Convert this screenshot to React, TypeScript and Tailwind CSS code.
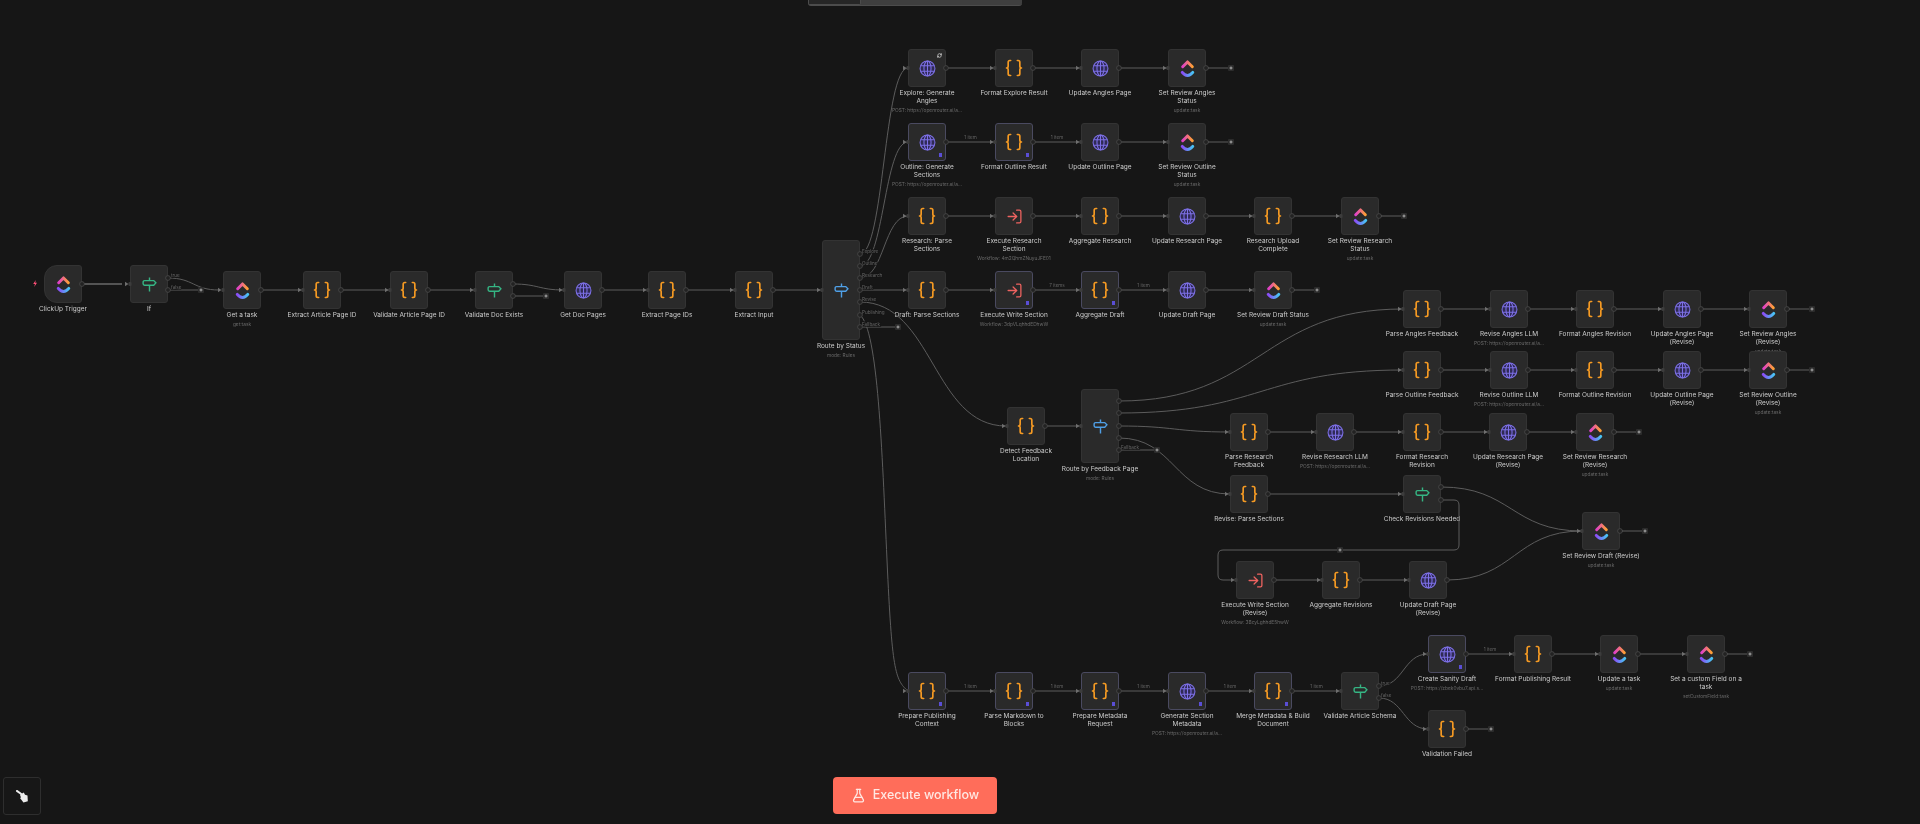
import { Braces, FlaskConical, LogIn, RefreshCw } from "lucide-react";

type Kind = "clickup" | "code" | "http" | "if" | "switch" | "exec";

type FlowNode = {
  id: string;
  x: number;
  y: number;
  kind: Kind;
  label: string[];
  sub?: string;
  h?: number;
  pin?: boolean;
  end?: boolean;
  trigger?: boolean;
  outs?: number[];
};

const LLM = "POST: https://openrouter.ai/a...";

const nodes: FlowNode[] = [
  { id: "trigger", x: 63, y: 284, kind: "clickup", label: ["ClickUp Trigger"], trigger: true },
  { id: "if", x: 149, y: 284, kind: "if", label: ["If"], outs: [278, 290] },
  { id: "task", x: 242, y: 290, kind: "clickup", label: ["Get a task"], sub: "get:task" },
  { id: "extract", x: 322, y: 290, kind: "code", label: ["Extract Article Page ID"] },
  { id: "validate", x: 409, y: 290, kind: "code", label: ["Validate Article Page ID"] },
  { id: "docExists", x: 494, y: 290, kind: "if", label: ["Validate Doc Exists"], outs: [284, 296] },
  { id: "docPages", x: 583, y: 290, kind: "http", label: ["Get Doc Pages"] },
  { id: "pageIds", x: 667, y: 290, kind: "code", label: ["Extract Page IDs"] },
  { id: "input", x: 754, y: 290, kind: "code", label: ["Extract Input"] },
  { id: "route", x: 841, y: 290, h: 100, kind: "switch", label: ["Route by Status"], sub: "mode: Rules", outs: [254, 266, 278, 290, 302, 315, 327] },

  { id: "e1", x: 927, y: 68, kind: "http", label: ["Explore: Generate", "Angles"], sub: LLM },
  { id: "e2", x: 1014, y: 68, kind: "code", label: ["Format Explore Result"] },
  { id: "e3", x: 1100, y: 68, kind: "http", label: ["Update Angles Page"] },
  { id: "e4", x: 1187, y: 68, kind: "clickup", label: ["Set Review Angles", "Status"], sub: "update:task", end: true },

  { id: "o1", x: 927, y: 142, kind: "http", label: ["Outline: Generate", "Sections"], sub: LLM, pin: true },
  { id: "o2", x: 1014, y: 142, kind: "code", label: ["Format Outline Result"], pin: true },
  { id: "o3", x: 1100, y: 142, kind: "http", label: ["Update Outline Page"] },
  { id: "o4", x: 1187, y: 142, kind: "clickup", label: ["Set Review Outline", "Status"], sub: "update:task", end: true },

  { id: "r1", x: 927, y: 216, kind: "code", label: ["Research: Parse", "Sections"] },
  { id: "r2", x: 1014, y: 216, kind: "exec", label: ["Execute Research", "Section"], sub: "Workflow: 4m2QhmZNuyuJFE01" },
  { id: "r3", x: 1100, y: 216, kind: "code", label: ["Aggregate Research"] },
  { id: "r4", x: 1187, y: 216, kind: "http", label: ["Update Research Page"] },
  { id: "r5", x: 1273, y: 216, kind: "code", label: ["Research Upload", "Complete"] },
  { id: "r6", x: 1360, y: 216, kind: "clickup", label: ["Set Review Research", "Status"], sub: "update:task", end: true },

  { id: "d1", x: 927, y: 290, kind: "code", label: ["Draft: Parse Sections"] },
  { id: "d2", x: 1014, y: 290, kind: "exec", label: ["Execute Write Section"], sub: "Workflow: 3dpVLqhhdEDhwW", pin: true },
  { id: "d3", x: 1100, y: 290, kind: "code", label: ["Aggregate Draft"], pin: true },
  { id: "d4", x: 1187, y: 290, kind: "http", label: ["Update Draft Page"] },
  { id: "d5", x: 1273, y: 290, kind: "clickup", label: ["Set Review Draft Status"], sub: "update:task", end: true },

  { id: "detect", x: 1026, y: 426, kind: "code", label: ["Detect Feedback", "Location"] },
  { id: "routeFb", x: 1100, y: 426, h: 74, kind: "switch", label: ["Route by Feedback Page"], sub: "mode: Rules", outs: [401, 413, 426, 438, 450] },

  { id: "a1", x: 1422, y: 309, kind: "code", label: ["Parse Angles Feedback"] },
  { id: "a2", x: 1509, y: 309, kind: "http", label: ["Revise Angles LLM"], sub: LLM },
  { id: "a3", x: 1595, y: 309, kind: "code", label: ["Format Angles Revision"] },
  { id: "a4", x: 1682, y: 309, kind: "http", label: ["Update Angles Page", "(Revise)"] },
  { id: "a5", x: 1768, y: 309, kind: "clickup", label: ["Set Review Angles", "(Revise)"], sub: "update:task", end: true },

  { id: "b1", x: 1422, y: 370, kind: "code", label: ["Parse Outline Feedback"] },
  { id: "b2", x: 1509, y: 370, kind: "http", label: ["Revise Outline LLM"], sub: LLM },
  { id: "b3", x: 1595, y: 370, kind: "code", label: ["Format Outline Revision"] },
  { id: "b4", x: 1682, y: 370, kind: "http", label: ["Update Outline Page", "(Revise)"] },
  { id: "b5", x: 1768, y: 370, kind: "clickup", label: ["Set Review Outline", "(Revise)"], sub: "update:task", end: true },

  { id: "c1", x: 1249, y: 432, kind: "code", label: ["Parse Research", "Feedback"] },
  { id: "c2", x: 1335, y: 432, kind: "http", label: ["Revise Research LLM"], sub: LLM },
  { id: "c3", x: 1422, y: 432, kind: "code", label: ["Format Research", "Revision"] },
  { id: "c4", x: 1508, y: 432, kind: "http", label: ["Update Research Page", "(Revise)"] },
  { id: "c5", x: 1595, y: 432, kind: "clickup", label: ["Set Review Research", "(Revise)"], sub: "update:task", end: true },

  { id: "s1", x: 1249, y: 494, kind: "code", label: ["Revise: Parse Sections"] },
  { id: "s2", x: 1422, y: 494, kind: "if", label: ["Check Revisions Needed"], outs: [487, 500] },
  { id: "sd", x: 1601, y: 531, kind: "clickup", label: ["Set Review Draft (Revise)"], sub: "update:task", end: true },
  { id: "w1", x: 1255, y: 580, kind: "exec", label: ["Execute Write Section", "(Revise)"], sub: "Workflow: 3BcyLghhdE5hwW" },
  { id: "w2", x: 1341, y: 580, kind: "code", label: ["Aggregate Revisions"] },
  { id: "w3", x: 1428, y: 580, kind: "http", label: ["Update Draft Page", "(Revise)"] },

  { id: "p1", x: 927, y: 691, kind: "code", label: ["Prepare Publishing", "Context"], pin: true },
  { id: "p2", x: 1014, y: 691, kind: "code", label: ["Parse Markdown to", "Blocks"], pin: true },
  { id: "p3", x: 1100, y: 691, kind: "code", label: ["Prepare Metadata", "Request"], pin: true },
  { id: "p4", x: 1187, y: 691, kind: "http", label: ["Generate Section", "Metadata"], sub: LLM, pin: true },
  { id: "p5", x: 1273, y: 691, kind: "code", label: ["Merge Metadata & Build", "Document"], pin: true },
  { id: "p6", x: 1360, y: 691, kind: "if", label: ["Validate Article Schema"], outs: [686, 698] },
  { id: "u1", x: 1447, y: 654, kind: "http", label: ["Create Sanity Draft"], sub: "POST: https://zbek0vbu7.api.s...", pin: true },
  { id: "u2", x: 1533, y: 654, kind: "code", label: ["Format Publishing Result"] },
  { id: "u3", x: 1619, y: 654, kind: "clickup", label: ["Update a task"], sub: "update:task" },
  { id: "u4", x: 1706, y: 654, kind: "clickup", label: ["Set a custom Field on a", "task"], sub: "setCustomField:task", end: true },
  { id: "vf", x: 1447, y: 729, kind: "code", label: ["Validation Failed"], end: true },
];

// straight runs of nodes, "label" is the item count over the line
const chains: [string, string, string?][] = [
  ["task", "extract"], ["extract", "validate"], ["validate", "docExists"], ["docPages", "pageIds"], ["pageIds", "input"], ["input", "route"],
  ["e1", "e2"], ["e2", "e3"], ["e3", "e4"],
  ["o1", "o2", "1 item"], ["o2", "o3", "1 item"], ["o3", "o4"],
  ["r1", "r2"], ["r2", "r3"], ["r3", "r4"], ["r4", "r5"], ["r5", "r6"],
  ["d2", "d3", "7 items"], ["d3", "d4", "1 item"], ["d4", "d5"], ["d1", "d2"],
  ["detect", "routeFb"],
  ["a1", "a2"], ["a2", "a3"], ["a3", "a4"], ["a4", "a5"],
  ["b1", "b2"], ["b2", "b3"], ["b3", "b4"], ["b4", "b5"],
  ["c1", "c2"], ["c2", "c3"], ["c3", "c4"], ["c4", "c5"],
  ["w1", "w2"], ["w2", "w3"],
  ["p1", "p2", "1 item"], ["p2", "p3", "1 item"], ["p3", "p4", "1 item"], ["p4", "p5", "1 item"], ["p5", "p6", "1 item"],
  ["u1", "u2", "1 item"], ["u2", "u3"], ["u3", "u4"],
];

const curve = (x1: number, y1: number, x2: number, y2: number) => {
  const mx = (x1 + x2) / 2;
  return `M${x1} ${y1} C${mx} ${y1} ${mx} ${y2} ${x2} ${y2}`;
};

const curves = [
  curve(168, 278, 219, 290),
  curve(513, 284, 564, 290),
  curve(860, 254, 908, 68),
  curve(860, 266, 908, 142),
  curve(860, 278, 908, 216),
  "M860 290 H908",
  curve(860, 302, 1006, 426),
  "M860 315 C878 330 882 450 887 560 S895 680 908 691",
  curve(1119, 401, 1403, 309),
  curve(1119, 413, 1403, 370),
  curve(1119, 426, 1230, 432),
  curve(1119, 438, 1230, 494),
  curve(1441, 487, 1582, 531),
  curve(1447, 580, 1582, 531),
  "M1268 494 H1403",
  "M1441 500 H1454 Q1459 500 1459 505 V545 Q1459 550 1454 550 H1223 Q1218 550 1218 555 V575 Q1218 580 1223 580 H1236",
  curve(1379, 686, 1428, 654),
  curve(1379, 698, 1428, 729),
];

// stubs that end in a bare plus
const stubs: [number, number, number][] = [
  [168, 290, 201],
  [513, 296, 546],
  [860, 327, 898],
  [1119, 450, 1157],
];

const portLabels: [number, number, string][] = [
  [171, 277, "true"], [171, 289, "false"],
  [862, 253, "Explore"], [862, 265, "Outline"], [862, 277, "Research"], [862, 289, "Draft"], [862, 301, "Revise"], [862, 314, "Publishing"], [862, 326, "Fallback"],
  [1121, 449, "Fallback"],
  [1381, 685, "true"], [1381, 697, "false"],
];

const ClickUpIcon = () => (
  <svg viewBox="0 0 24 24" className="h-[21px] w-[21px]" fill="none" strokeWidth="3.4" strokeLinecap="round" strokeLinejoin="round">
    <defs>
      <linearGradient id="cu-top" x1="0" x2="1" y1="0" y2="0">
        <stop offset="0" stopColor="#e040c8" />
        <stop offset="1" stopColor="#ffa035" />
      </linearGradient>
      <linearGradient id="cu-bot" x1="0" x2="1" y1="0" y2="0">
        <stop offset="0" stopColor="#8b4cf6" />
        <stop offset="1" stopColor="#48c4f5" />
      </linearGradient>
    </defs>
    <path d="M6.5 10 12 4.5l5.5 5.5" stroke="url(#cu-top)" />
    <path d="M6 16.5C7.8 18.8 9.8 20 12 20s4.2-1.2 6-3.5" stroke="url(#cu-bot)" />
  </svg>
);

const GlobeIcon = () => (
  <svg viewBox="0 0 24 24" className="h-[17px] w-[17px]" fill="#2f2a55" stroke="#7d70e6" strokeWidth="1.5">
    <circle cx="12" cy="12" r="10.5" />
    <ellipse cx="12" cy="12" rx="5" ry="10.5" fill="none" />
    <path d="M12 1.5v21M2.8 8h18.4M2.8 16h18.4" fill="none" />
  </svg>
);

const SignIcon = ({ color }: { color: string }) => (
  <svg viewBox="0 0 24 24" className="h-[17px] w-[17px]" fill="none" stroke={color} strokeWidth="2">
    <path d="M12 2v4M12 14v8" />
    <path d="M5 6.5h13l3 3.2-3 3.3H5a2 2 0 0 1-2-2V8.5a2 2 0 0 1 2-2z" />
  </svg>
);

const BroomIcon = () => (
  <svg viewBox="0 0 24 24" className="h-[15px] w-[15px]" fill="#ececec">
    <path d="M3 3 10 8" stroke="#ececec" strokeWidth="3" strokeLinecap="round" />
    <path d="M8 9 14 5.5l2 3.5 4 1.5 .5 9-7 2-3-4-2.5-3 1.5-1z" />
  </svg>
);

const NodeIcon = ({ kind }: { kind: Kind }) => {
  if (kind === "clickup") return <ClickUpIcon />;
  if (kind === "http") return <GlobeIcon />;
  if (kind === "if") return <SignIcon color="#35b583" />;
  if (kind === "switch") return <SignIcon color="#4f9fe6" />;
  if (kind === "exec") return <LogIn size={17} color="#ef6360" strokeWidth={1.8} />;
  return <Braces size={20} color="#f59a23" strokeWidth={2} />;
};

const CanvasNode = ({ node }: { node: FlowNode }) => {
  const h = node.h ?? 38;
  return (
    <div
      className="absolute flex w-[120px] flex-col items-center"
      style={{ left: node.x - 60, top: node.y - h / 2 }}
    >
      <div
        className={`relative flex w-[38px] items-center justify-center border bg-[#2a2a2a] ${
          node.trigger ? "rounded-l-[13px] rounded-r-[3px]" : "rounded-[3px]"
        } ${node.pin ? "border-[#4a4a60]" : "border-[#333333]"}`}
        style={{ height: h }}
      >
        <NodeIcon kind={node.kind} />
        {node.pin && <span className="absolute bottom-[3px] right-[3px] h-[4px] w-[3px] bg-[#5a4ed6]" />}
        {node.id === "e1" && <RefreshCw size={5} color="#e5e5e5" strokeWidth={3} className="absolute right-[3px] top-[3px]" />}
      </div>
      <div className="mt-[2px] whitespace-nowrap text-center text-[6.5px] leading-[8px] text-[#cccccc]">
        {node.label.map((line) => (
          <div key={line}>{line}</div>
        ))}
      </div>
      {node.sub && <div className="mt-[2px] whitespace-nowrap text-[4.8px] leading-[6px] text-[#6a6a6a]">{node.sub}</div>}
    </div>
  );
};

const Plus = ({ x, y }: { x: number; y: number }) => (
  <g>
    <rect x={x - 3} y={y - 3} width="6" height="6" rx="1" fill="#2c2c2c" />
    <path d={`M${x - 1.5} ${y}h3M${x} ${y - 1.5}v3`} stroke="#c4c4c4" strokeWidth="0.8" />
  </g>
);

const Wires = () => {
  const byId = Object.fromEntries(nodes.map((n) => [n.id, n]));
  return (
    <svg className="pointer-events-none absolute left-0 top-0" width="1920" height="824" fill="none">
      <path d="M82 284 H122" stroke="#6a6a6a" strokeWidth="1.4" />
      {chains.map(([a, b, text]) => {
        const x1 = byId[a].x + 19;
        const x2 = byId[b].x - 19;
        const y = byId[a].y;
        return (
          <g key={a + b}>
            <path d={`M${x1} ${y} H${x2 - 1}`} stroke="#5c5c5c" />
            {text && (
              <text x={(x1 + x2) / 2} y={y - 3.5} textAnchor="middle" fontSize="4.6" fill="#666">
                {text}
              </text>
            )}
          </g>
        );
      })}
      {curves.map((d) => (
        <path key={d} d={d} stroke="#5c5c5c" />
      ))}
      {stubs.map(([x1, y, x2]) => (
        <g key={x1 + "-" + y}>
          <path d={`M${x1} ${y} H${x2}`} stroke="#5c5c5c" />
          <Plus x={x2} y={y} />
        </g>
      ))}
      <Plus x={1340} y={550} />
      {portLabels.map(([x, y, text]) => (
        <text key={x + text + y} x={x} y={y} fontSize="4.6" fill="#666" stroke="#161616" strokeWidth="1.5" paintOrder="stroke">
          {text}
        </text>
      ))}
      {nodes.map((n) => {
        const left = n.x - 19;
        const right = n.x + 19;
        return (
          <g key={n.id}>
            {!n.trigger && (
              <g>
                <rect x={left - 1.5} y={n.y - 2} width="3" height="4" rx="1" fill="#3c3c3c" />
                <path d={`M${left - 5} ${n.y - 2.2} L${left - 1.5} ${n.y} L${left - 5} ${n.y + 2.2}z`} fill="#6e6e6e" />
              </g>
            )}
            {(n.outs ?? [n.y]).map((oy) => (
              <circle key={oy} cx={right} cy={oy} r="2.4" fill="#222" stroke="#4a4a4a" strokeWidth="0.8" />
            ))}
            {n.end && (
              <g>
                <path d={`M${right + 2} ${n.y} H${right + 25}`} stroke="#5c5c5c" />
                <Plus x={right + 25} y={n.y} />
              </g>
            )}
          </g>
        );
      })}
      {/* trigger bolt */}
      <path d="M35.8 280 33.2 284h1.8l-.8 3 2.8-4.2h-1.8z" fill="#ff4f78" />
    </svg>
  );
};

export default function App() {
  return (
    <div className="relative h-[824px] w-[1920px] overflow-hidden bg-[#161616] font-['Inter',sans-serif] blur-[0.4px]">
      <div className="absolute left-[808px] top-0 flex h-[6px] w-[214px] overflow-hidden rounded-b-[3px] border-b border-[#4c4c4c] bg-[#3f3f3f]">
        <div className="w-[53px] rounded-br-[2px] border-x border-b border-[#4c4c4c] bg-[#262626]" />
      </div>

      {nodes.map((node) => (
        <CanvasNode key={node.id} node={node} />
      ))}
      <Wires />

      <button className="absolute bottom-[9px] left-[3px] flex h-[38px] w-[38px] items-center justify-center rounded-[3px] border border-[#2e2e2e] bg-[#171717]">
        <BroomIcon />
      </button>

      <button className="absolute left-[833px] top-[777px] flex h-[37px] w-[164px] items-center justify-center gap-[7px] rounded-[4px] bg-[#ff6d5a] text-[12.5px] font-medium text-[#ffe8e3]">
        <FlaskConical size={15} strokeWidth={2} />
        Execute workflow
      </button>
    </div>
  );
}
